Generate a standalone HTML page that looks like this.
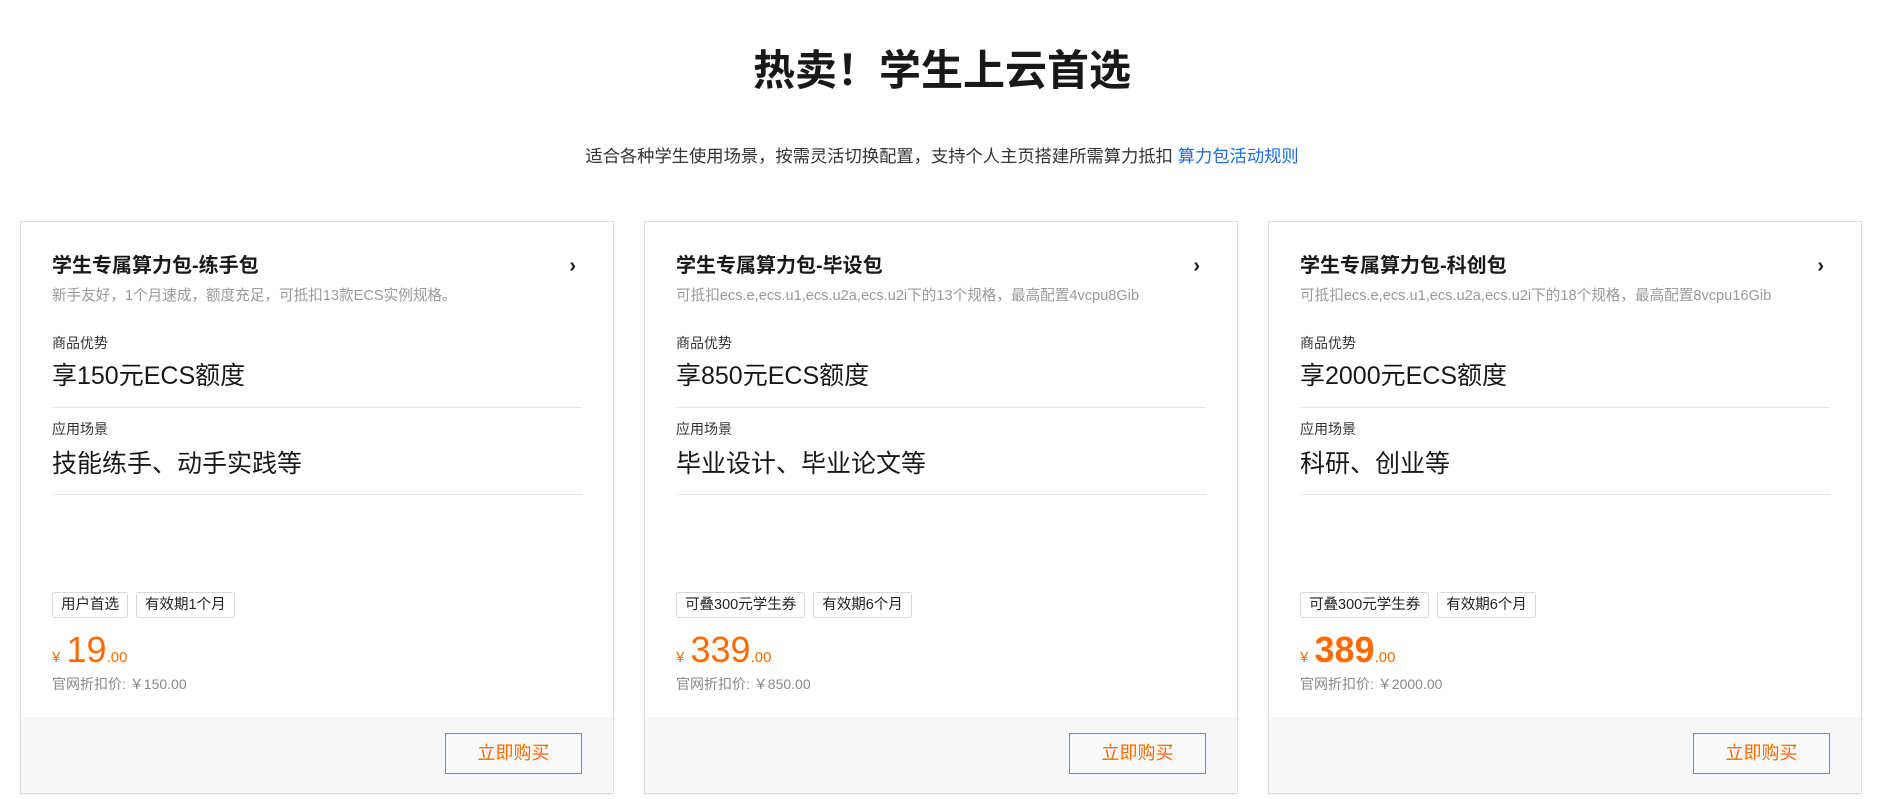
<!DOCTYPE html>
<html><head><meta charset="utf-8"><style>
*{margin:0;padding:0;box-sizing:border-box}
body{width:1884px;height:799px;background:#fff;font-family:"Liberation Sans","Noto Sans CJK SC",sans-serif;color:#1a1a1a;position:relative;overflow:hidden}
.t{position:absolute;top:44px;left:0;width:1884px;text-align:center;font-size:42px;font-weight:bold;line-height:54px;color:#181818}
.s{position:absolute;top:144px;left:0;width:1884px;text-align:center;font-size:17.3px;line-height:24px;color:#333}
.s a{color:#1a6ef5;text-decoration:none}
.card{position:absolute;top:221px;width:594px;height:573px;border:1px solid #dcdcdc;box-shadow:0 1px 3px rgba(0,0,0,.08);background:#fff}
.in{position:absolute;left:31px;right:31px}
.h{top:31px;font-size:20px;font-weight:bold;line-height:26px;color:#181818}
.chev{position:absolute;right:6px;top:0;font-weight:bold}
.d{top:64px;font-size:14.6px;color:#999;line-height:20px}
.l1{font-size:14px;color:#333;line-height:20px}
.v{font-size:25px;color:#181818;line-height:32px}
.hr{height:1px;background:#e8e8e8}
.tags{top:370px;display:flex;gap:8px}
.tag{border:1px solid #d8d8d8;border-radius:3px;font-size:14.5px;line-height:24px;padding:0 8px;color:#222}
.pr{top:406px;color:#ff6a00;line-height:44px;white-space:nowrap}
.pr .y{font-size:15px}.pr .n{font-size:36px;margin-left:2px}.pr .c{font-size:15px}
.o{top:452px;font-size:14px;color:#888}
.ft{position:absolute;left:0;right:0;bottom:0;height:76px;background:#f7f7f7}
.btn{position:absolute;right:31px;top:16px;width:137px;height:41px;border:1px solid #7d8aab;color:#ff6a00;font-size:18px;text-align:center;line-height:39px;background:#f9f9f9}
</style></head><body>
<div class="t">热卖！学生上云首选</div>
<div class="s">适合各种学生使用场景，按需灵活切换配置，支持个人主页搭建所需算力抵扣 <a>算力包活动规则</a></div>

<div class="card" style="left:20px">
<div class="in h">学生专属算力包-练手包<span class="chev">›</span></div>
<div class="in d">新手友好，1个月速成，额度充足，可抵扣13款ECS实例规格。</div>
<div class="in l1" style="top:111px">商品优势</div>
<div class="in v" style="top:138px">享150元ECS额度</div>
<div class="in hr" style="top:185px"></div>
<div class="in l1" style="top:197px">应用场景</div>
<div class="in v" style="top:226px">技能练手、动手实践等</div>
<div class="in hr" style="top:272px"></div>
<div class="in tags"><span class="tag">用户首选</span><span class="tag">有效期1个月</span></div>
<div class="in pr"><span class="y">¥ </span><span class="n">19</span><span class="c">.00</span></div>
<div class="in o">官网折扣价: ￥150.00</div>
<div class="ft"><div class="btn">立即购买</div></div>
</div>

<div class="card" style="left:644px">
<div class="in h">学生专属算力包-毕设包<span class="chev">›</span></div>
<div class="in d">可抵扣ecs.e,ecs.u1,ecs.u2a,ecs.u2i下的13个规格，最高配置4vcpu8Gib</div>
<div class="in l1" style="top:111px">商品优势</div>
<div class="in v" style="top:138px">享850元ECS额度</div>
<div class="in hr" style="top:185px"></div>
<div class="in l1" style="top:197px">应用场景</div>
<div class="in v" style="top:226px">毕业设计、毕业论文等</div>
<div class="in hr" style="top:272px"></div>
<div class="in tags"><span class="tag">可叠300元学生券</span><span class="tag">有效期6个月</span></div>
<div class="in pr"><span class="y">¥ </span><span class="n">339</span><span class="c">.00</span></div>
<div class="in o">官网折扣价: ￥850.00</div>
<div class="ft"><div class="btn">立即购买</div></div>
</div>

<div class="card" style="left:1268px">
<div class="in h">学生专属算力包-科创包<span class="chev">›</span></div>
<div class="in d">可抵扣ecs.e,ecs.u1,ecs.u2a,ecs.u2i下的18个规格，最高配置8vcpu16Gib</div>
<div class="in l1" style="top:111px">商品优势</div>
<div class="in v" style="top:138px">享2000元ECS额度</div>
<div class="in hr" style="top:185px"></div>
<div class="in l1" style="top:197px">应用场景</div>
<div class="in v" style="top:226px">科研、创业等</div>
<div class="in hr" style="top:272px"></div>
<div class="in tags"><span class="tag">可叠300元学生券</span><span class="tag">有效期6个月</span></div>
<div class="in pr"><span class="y">¥ </span><span class="n" style="font-weight:bold">389</span><span class="c">.00</span></div>
<div class="in o">官网折扣价: ￥2000.00</div>
<div class="ft"><div class="btn">立即购买</div></div>
</div>
</body></html>
